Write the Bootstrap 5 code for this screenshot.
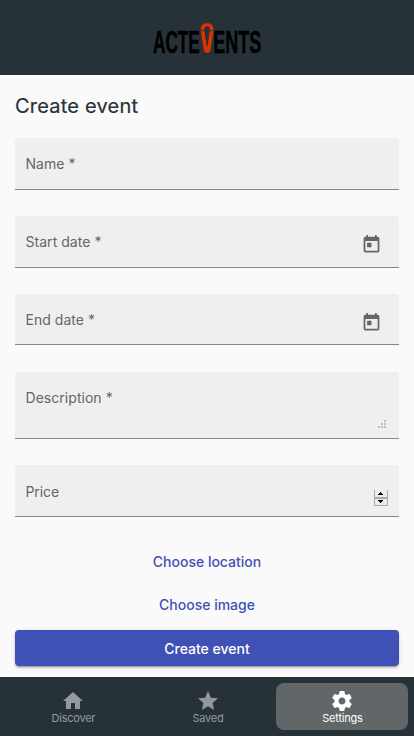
<!DOCTYPE html>
<html lang="en">
<head>
<meta charset="utf-8">
<meta name="viewport" content="width=device-width, initial-scale=1">
<title>Create event</title>
<link href="https://cdn.jsdelivr.net/npm/bootstrap@5.3.0/dist/css/bootstrap.min.css" rel="stylesheet">
<style>
body{font-family:Inter,sans-serif;background:#fafafa;color:#263238;height:736px;overflow:hidden}
.top-bar{height:75px;background:#263238}
.page-title{font-size:20px;line-height:32px;font-weight:400;margin:15px 0 16px;letter-spacing:.22px;-webkit-text-stroke:.2px #263238}
.field{height:52px;background:#efefef;border-bottom:1px solid #858585;border-radius:4px 4px 0 0;padding:0 17px 0 10.5px;margin-bottom:26px;font-size:14px;line-height:20px;color:#666}
.field-label{padding-top:16px;letter-spacing:.04px}
.field-end{height:51px;margin-bottom:27px}
.field-area{height:67px}
.field-price .field-label{padding-top:17px;letter-spacing:-.1px}
.calendar{margin-top:18px}
.grip{margin-bottom:10px;margin-right:-4px}
.spin{margin-top:25px;margin-right:-6px}
.content{margin:0 -1px}
.link-btn{height:36px;font-size:14px;font-weight:500;color:#3f51b5;padding:0;border:0;line-height:36px}
.link-location{margin-top:27px}
.link-image{margin-top:7px}
.submit-btn{margin-top:7px;height:36px;font-size:14px;font-weight:500;color:#fff;background:#3f51b5;border:0;border-radius:4px;padding:0;line-height:37px;box-shadow:0 3px 1px -2px rgba(0,0,0,.2),0 2px 2px rgba(0,0,0,.14),0 1px 5px rgba(0,0,0,.12)}
.tabs{height:59px;background:#263238;padding:6px 6px 6px 7px;gap:2.5px}
.tab{width:132px;height:47px;border-radius:8px;color:#939a9e;font-size:11px;line-height:14px;padding:6px 0 0 .8px;letter-spacing:-.24px;text-decoration:none}
.tab.current{background:#616669;color:#fff}
.tab svg{margin-bottom:-2px}
</style>
</head>
<body class="d-flex flex-column">
<header class="top-bar flex-shrink-0 d-flex justify-content-center">
<svg width="110" height="75" viewBox="152 0 110 75" role="img" aria-label="Actevents">
<g font-family="Liberation Sans, sans-serif" font-weight="700" font-size="31.5" stroke="#000" stroke-width=".5">
<text transform="translate(153 52.5) scale(.546 1)">ACTE</text>
<text transform="translate(213.2 52.5) scale(.571 1)">ENTS</text>
</g>
<path d="M200.700 30V29Q201 23.300 207.100 23.300T213.300 29V30H210V29Q209.700 26.300 207.100 26.300T204.300 29V30Z" fill="#dd3300"/>
<path d="M200.700 30.800H204.500L207.100 47 209.700 30.800H213.500L210.300 50.500Q209.700 52.900 207.100 52.900T203.900 50.500Z" fill="#dd3300"/>
<path d="M204.500 29.800V30.800L207.100 47 209.700 30.800V29.800Z" fill="#263238"/>
</svg>
</header>
<main class="flex-grow-1 px-3">
<div class="content">
<h1 class="page-title">Create event</h1>
<div class="field"><div class="field-label">Name *</div></div>
<div class="field d-flex justify-content-between"><div class="field-label">Start date *</div>
<svg class="calendar" width="21" height="21" viewBox="0 0 24 24" fill="#666"><path d="M19 3h-1V1h-2v2H8V1H6v2H5c-1.1 0-2 .9-2 2v14c0 1.100.9 2 2 2h14c1.100 0 2-.9 2-2V5c0-1.100-.9-2-2-2zm0 16H5V8h14v11zM7 10h5v5H7z"/></svg></div>
<div class="field field-end d-flex justify-content-between"><div class="field-label">End date *</div>
<svg class="calendar" width="21" height="21" viewBox="0 0 24 24" fill="#666"><path d="M19 3h-1V1h-2v2H8V1H6v2H5c-1.100 0-2 .9-2 2v14c0 1.100.9 2 2 2h14c1.100 0 2-.9 2-2V5c0-1.100-.9-2-2-2zm0 16H5V8h14v11zM7 10h5v5H7z"/></svg></div>
<div class="field field-area d-flex justify-content-between"><div class="field-label">Description *</div>
<svg class="grip align-self-end" width="8" height="8" fill="#bdbdbd"><path d="M6 0h2v2H6zM3 3h2v2H3zM6 3h2v2H6zM0 6h2v2H0zM3 6h2v2H3zM6 6h2v2H6z"/></svg></div>
<div class="field field-price d-flex justify-content-between"><div class="field-label">Price</div>
<svg class="spin" width="14" height="16"><path fill="#ececec" d="M0 0h14v16H0z"/><path fill="#aaa" d="M0 0h1v16H0zM13 0h1v16h-1zM0 7h14v2H0zM0 15h14v1H0z"/><path d="M4 5h5V4H8V3H7V2H6v1H5v1H4zM4 10h5v1H8v1H7v1H6v-1H5v-1H4z"/></svg></div>
<button class="btn link-btn link-location w-100 d-block">Choose location</button>
<button class="btn link-btn link-image w-100 d-block">Choose image</button>
<button class="btn submit-btn w-100 d-block">Create event</button>
</div>
</main>
<nav class="tabs flex-shrink-0 d-flex">
<a class="tab d-flex flex-column align-items-center"><svg width="24" height="24" viewBox="0 0 24 24" fill="currentColor"><path d="M10 20v-6h4v6h5v-8h3L12 3 2 12h3v8z"/></svg>Discover</a>
<a class="tab d-flex flex-column align-items-center"><svg width="24" height="24" viewBox="0 0 24 24" fill="currentColor"><path d="M12 17.270 18.180 21l-1.640-7.030L22 9.240l-7.190-.610L12 2 9.190 8.630 2 9.240l5.460 4.730L5.820 21z"/></svg>Saved</a>
<a class="tab current d-flex flex-column align-items-center"><svg width="24" height="24" viewBox="0 0 24 24" fill="currentColor"><path d="M19.430 12.980c.04-.32.07-.64.07-.98s-.03-.66-.07-.98l2.110-1.650c.19-.15.24-.42.120-.64l-2-3.460c-.12-.22-.39-.3-.61-.22l-2.490 1c-.52-.4-1.080-.73-1.690-.98l-.38-2.650C14.460 2.180 14.250 2 14 2h-4c-.25 0-.46.18-.49.42l-.38 2.650c-.61.25-1.170.59-1.690.98l-2.490-1c-.23-.09-.49 0-.61.22l-2 3.460c-.13.22-.07.49.120.64l2.110 1.650c-.04.32-.07.65-.07.98s.03.66.07.98l-2.110 1.650c-.19.15-.24.42-.12.64l2 3.460c.12.22.39.3.61.22l2.490-1c.52.4 1.080.73 1.690.98l.38 2.650c.03.24.24.42.49.42h4c.25 0 .46-.18.49-.42l.38-2.650c.61-.25 1.170-.59 1.690-.98l2.490 1c.23.09.49 0 .61-.22l2-3.460c.12-.22.07-.49-.12-.64l-2.110-1.650zM12 15.500c-1.930 0-3.500-1.570-3.500-3.500s1.570-3.500 3.500-3.500 3.500 1.570 3.500 3.500-1.570 3.500-3.500 3.500z"/></svg>Settings</a>
</nav>
<script src="https://cdn.jsdelivr.net/npm/bootstrap@5.3.0/dist/js/bootstrap.bundle.min.js"></script>
</body>
</html>
